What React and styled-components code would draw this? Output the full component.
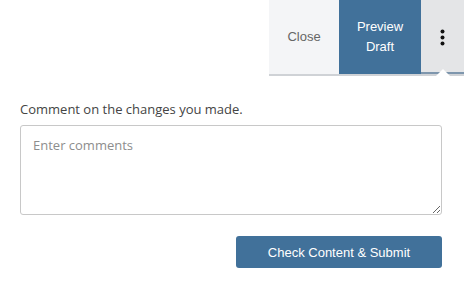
import React from "react";
import styled, { createGlobalStyle } from "styled-components";

const Global = createGlobalStyle`
  html, body { margin: 0; padding: 0; background: #fff; }
  body { font-family: "Open Sans", "Liberation Sans", sans-serif; }
`;

const Page = styled.div`
  width: 464px;
  height: 281px;
  display: flex;
  flex-direction: column;
`;

const Toolbar = styled.div`
  align-self: flex-end;
  display: flex;
  height: 74px;
  border-bottom: 2px solid #cfd2d6;
`;

const ToolButton = styled.button`
  position: relative;
  border: 0;
  margin: 0;
  padding: 0;
  width: ${(p) => p.$w}px;
  background: ${(p) => p.$bg};
  color: ${(p) => p.$color};
  font-family: "Liberation Sans", Arial, sans-serif;
  font-size: 13px;
  line-height: 20px;
  display: flex;
  align-items: center;
  justify-content: center;
  text-align: center;
`;

const MenuButton = styled(ToolButton)`
  box-shadow: inset 0 -2px 0 #7e96ad;
  &::after {
    content: "";
    position: absolute;
    left: 15px;
    bottom: -2px;
    border-left: 7px solid transparent;
    border-right: 7px solid transparent;
    border-bottom: 7px solid #fff;
  }
`;

const Body = styled.div`
  padding: 24px 22px 0 20px;
  display: flex;
  flex-direction: column;
`;

const Label = styled.label`
  font-size: 13px;
  color: #444;
  line-height: 18px;
  margin-bottom: 7px;
`;

const Comments = styled.textarea`
  box-sizing: border-box;
  width: 100%;
  height: 90px;
  border: 1px solid #c8c8c8;
  border-radius: 3px;
  padding: 10px 12px;
  font-family: "Open Sans", "Liberation Sans", sans-serif;
  font-size: 13px;
  line-height: 18px;
  color: #333;
  &::placeholder { color: #8d8d8d; }
`;

const Actions = styled.div`
  display: flex;
  justify-content: flex-end;
  margin-top: 21px;
`;

const Submit = styled.button`
  width: 206px;
  height: 32px;
  border: 0;
  border-radius: 3px;
  background: #41719a;
  color: #fff;
  font-family: "Liberation Sans", Arial, sans-serif;
  font-size: 13px;
`;

function Dots() {
  return (
    <svg width="5" height="17" viewBox="0 0 5 17">
      <circle cx="2.5" cy="2.5" r="2" fill="#111" />
      <circle cx="2.5" cy="8.5" r="2" fill="#111" />
      <circle cx="2.5" cy="14.5" r="2" fill="#111" />
    </svg>
  );
}

export default function App() {
  return (
    <Page>
      <Global />
      <Toolbar>
        <ToolButton $w={70} $bg="#f4f5f7" $color="#666">Close</ToolButton>
        <ToolButton $w={82} $bg="#41719a" $color="#fff">
          Preview
          <br />
          Draft
        </ToolButton>
        <MenuButton $w={43} $bg="#e4e5e7" $color="#111">
          <Dots />
        </MenuButton>
      </Toolbar>
      <Body>
        <Label>Comment on the changes you made.</Label>
        <Comments placeholder="Enter comments" />
        <Actions>
          <Submit>Check Content &amp; Submit</Submit>
        </Actions>
      </Body>
    </Page>
  );
}
